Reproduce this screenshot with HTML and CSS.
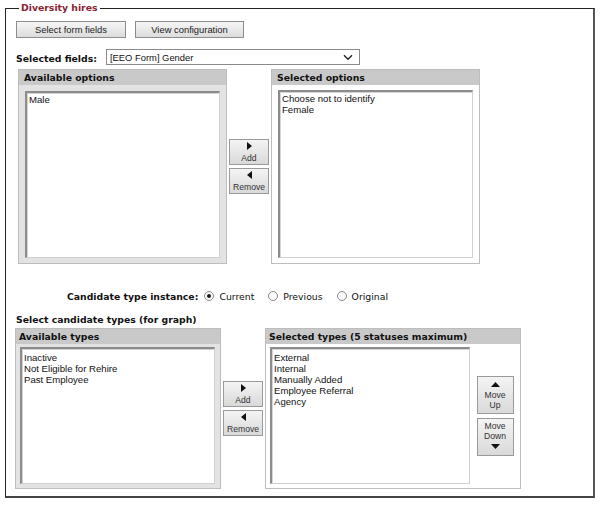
FILE: index.html
```html
<!DOCTYPE html>
<html>
<head>
<meta charset="utf-8">
<link rel="stylesheet" href="styles.css">
</head>
<body>
<fieldset class="box">
  <legend class="legend">Diversity hires</legend>
  <div class="toolbar">
    <button class="btn btn-form">Select form fields</button>
    <button class="btn btn-config">View configuration</button>
  </div>
  <div class="field-row">
    <span class="label">Selected fields:</span>
    <div class="select">
      <span class="select-text">[EEO Form] Gender</span>
      <svg class="chev" width="10" height="7" viewBox="0 0 10 7"><path d="M1 1.2 L5 5.2 L9 1.2" fill="none" stroke="#222" stroke-width="1.4"/></svg>
    </div>
  </div>

  <div class="dual dual-options">
    <div class="panel panel-a1">
      <div class="panel-head">Available options</div>
      <div class="panel-body">
        <div class="listbox"><div class="opt">Male</div></div>
      </div>
    </div>
    <div class="mover">
      <button class="mbtn"><svg width="5" height="8" viewBox="0 0 5 8"><path d="M0 0 L5 4 L0 8 Z" fill="#111"/></svg><span>Add</span></button>
      <button class="mbtn"><svg width="5" height="8" viewBox="0 0 5 8"><path d="M5 0 L0 4 L5 8 Z" fill="#111"/></svg><span>Remove</span></button>
    </div>
    <div class="panel panel-s1">
      <div class="panel-head">Selected options</div>
      <div class="panel-body">
        <div class="listbox"><div class="opt">Choose not to identify</div><div class="opt">Female</div></div>
      </div>
    </div>
  </div>

  <div class="radio-row">
    <span class="label">Candidate type instance:</span>
    <span class="radio checked"></span><span class="rlabel">Current</span>
    <span class="radio"></span><span class="rlabel">Previous</span>
    <span class="radio"></span><span class="rlabel">Original</span>
  </div>

  <div class="section-title">Select candidate types (for graph)</div>

  <div class="dual dual-types">
    <div class="panel panel-a2">
      <div class="panel-head">Available types</div>
      <div class="panel-body">
        <div class="listbox"><div class="opt">Inactive</div><div class="opt">Not Eligible for Rehire</div><div class="opt">Past Employee</div></div>
      </div>
    </div>
    <div class="mover">
      <button class="mbtn"><svg width="5" height="8" viewBox="0 0 5 8"><path d="M0 0 L5 4 L0 8 Z" fill="#111"/></svg><span>Add</span></button>
      <button class="mbtn"><svg width="5" height="8" viewBox="0 0 5 8"><path d="M5 0 L0 4 L5 8 Z" fill="#111"/></svg><span>Remove</span></button>
    </div>
    <div class="panel panel-s2">
      <div class="panel-head">Selected types (5 statuses maximum)</div>
      <div class="panel-body">
        <div class="listbox"><div class="opt">External</div><div class="opt">Internal</div><div class="opt">Manually Added</div><div class="opt">Employee Referral</div><div class="opt">Agency</div></div>
        <div class="order">
          <button class="obtn"><svg width="9" height="5" viewBox="0 0 9 5"><path d="M0 5 L4.5 0 L9 5 Z" fill="#111"/></svg><span>Move</span><span>Up</span></button>
          <button class="obtn"><span>Move</span><span>Down</span><svg width="9" height="5" viewBox="0 0 9 5"><path d="M0 0 L4.5 5 L9 0 Z" fill="#111"/></svg></button>
        </div>
      </div>
    </div>
  </div>
</fieldset>
</body>
</html>
```

FILE: styles.css
```css
html, body {
  margin: 0;
  padding: 0;
  background: #fff;
}

body {
  font-family: "DejaVu Sans", Verdana, sans-serif;
  font-size: 9.3px;
  color: #111;
}

.box {
  margin: 0 5px;
  padding: 0 0 7px 0;
  border: 1px solid #222;
  border-right: 2px solid #555;
  border-bottom: 2px solid #444;
  min-width: 0;
}

.legend {
  margin-left: 13px;
  padding: 0 2px;
  font-weight: bold;
  font-size: 9.3px;
  line-height: 16px;
  color: #8b2333;
}

.toolbar {
  display: flex;
  gap: 9px;
  margin: 5px 0 0 10px;
}

.btn {
  box-sizing: border-box;
  height: 17px;
  padding: 0;
  font-family: "Liberation Sans", Arial, sans-serif;
  font-size: 9.4px;
  color: #222;
  background: linear-gradient(#f6f6f6, #dcdcdc);
  border: 1px solid #8d8d8d;
  border-radius: 0;
}

.btn-form { width: 110px; }
.btn-config { width: 109px; }

.field-row {
  display: flex;
  align-items: center;
  margin: 11px 0 0 10px;
  height: 16px;
}

.label {
  font-weight: bold;
}

.field-row .label {
  width: 90px;
  padding-top: 3px;
}

.select {
  box-sizing: border-box;
  width: 254px;
  height: 16px;
  border: 1px solid #8a8a8a;
  display: flex;
  align-items: center;
  justify-content: space-between;
  padding: 0 6px 0 3px;
  font-family: "Liberation Sans", Arial, sans-serif;
  font-size: 9.4px;
  color: #111;
}

.chev { display: block; }

.dual {
  display: flex;
}

.dual-options {
  margin: 4px 0 0 12px;
  height: 195px;
}

.dual-types {
  margin: 2px 0 0 9px;
  height: 161px;
}

.panel {
  box-sizing: border-box;
  display: flex;
  flex-direction: column;
  border: 1px solid #bdbdbd;
}

.panel-head {
  height: 15px;
  line-height: 15px;
  background: #c9c9c9;
  font-weight: bold;
  padding-left: 5px;
  white-space: nowrap;
  flex: none;
}

.panel-body {
  flex: 1;
  display: flex;
  min-height: 0;
}

.panel-a1, .panel-a2 {
  background: #e3e3e3;
}

.panel-s1, .panel-s2 {
  background: #fff;
}

.panel-a1, .panel-s1 { width: 209px; }
.panel-a1 .panel-body, .panel-s1 .panel-body { padding: 6px 6px 5px 6px; }
.panel-s1 .panel-body { padding-top: 5px; }
.panel-a1 .listbox, .panel-s1 .listbox { padding-top: 1px; }

.panel-a2 { width: 206px; }
.panel-a2 .panel-head { padding-left: 3px; }
.panel-a2 .panel-body { padding: 3px 5px 4px 4px; }

.panel-s2 { width: 256px; }
.panel-s2 .panel-head { padding-left: 3px; }
.panel-s2 .panel-body { padding: 3px 0 4px 4px; }

.listbox {
  box-sizing: border-box;
  flex: 1;
  background: #fff;
  border-top: 2px solid #8c8c8c;
  border-left: 2px solid #8c8c8c;
  border-right: 1px solid #d0d0d0;
  border-bottom: 1px solid #d0d0d0;
  box-shadow: inset 1px 1px 0 #d4d4d4;
  padding: 3px 2px;
  font-family: "Liberation Sans", Arial, sans-serif;
  font-size: 9.6px;
  line-height: 11px;
  color: #111;
}

.panel-s2 .listbox { flex: none; width: 200px; }

.opt { white-space: nowrap; }

.mover {
  width: 44px;
  display: flex;
  flex-direction: column;
  justify-content: center;
  align-items: center;
  gap: 3px;
}

.mbtn, .obtn {
  box-sizing: border-box;
  padding: 0;
  display: flex;
  flex-direction: column;
  align-items: center;
  justify-content: center;
  font-family: "Liberation Sans", Arial, sans-serif;
  font-size: 8.6px;
  line-height: 10px;
  color: #333;
  background: linear-gradient(#f4f4f4, #d9d9d9);
  border: 1px solid #9a9a9a;
  border-radius: 0;
}

.mbtn {
  width: 40px;
  height: 26px;
}

.mbtn svg { margin-bottom: 3px; }

.order {
  flex: 1;
  display: flex;
  flex-direction: column;
  align-items: center;
  justify-content: center;
  gap: 4px;
}

.obtn {
  width: 37px;
  height: 38px;
}

.obtn svg { margin: 3px 0; }

.radio-row {
  display: flex;
  align-items: center;
  height: 14px;
  margin: 25px 0 0 61px;
}

.radio-row .label { margin-right: 6px; }

.radio {
  box-sizing: border-box;
  width: 10px;
  height: 10px;
  border: 1px solid #8a8a8a;
  border-radius: 50%;
  background: #fafafa;
  display: flex;
  align-items: center;
  justify-content: center;
  margin-right: 5px;
}

.radio.checked::after {
  content: "";
  width: 4px;
  height: 4px;
  border-radius: 50%;
  background: #1a1a1a;
}

.rlabel { margin-right: 14px; }

.section-title {
  font-weight: bold;
  line-height: 12px;
  margin: 11px 0 0 10px;
}
```
